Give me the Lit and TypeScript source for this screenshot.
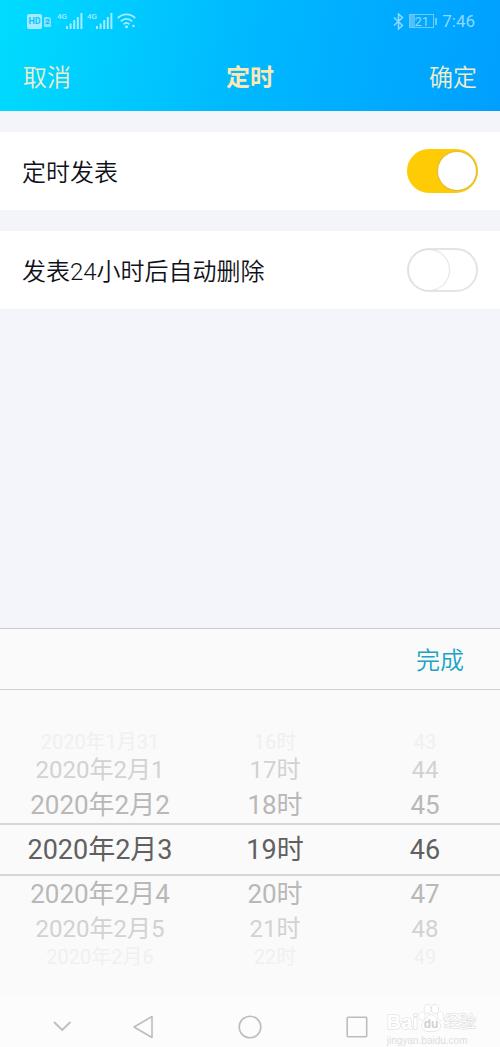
import { LitElement, html, css } from "lit";
import { customElement, property, state } from "lit/decorators.js";
import { classMap } from "lit/directives/class-map.js";

@customElement("status-bar")
class StatusBar extends LitElement {
  static styles = css`
    :host { display: flex; justify-content: space-between; align-items: center; height: 42px; padding: 0 25px 0 27px; color: #a3ebff; font-family: Roboto, sans-serif; }
    .group { display: flex; align-items: center; }
    .right { gap: 5px; color: #8fd8ff; }
    .hd { width: 15px; height: 15px; border-radius: 2px; background: #a3ebff; color: #0bc6f8; font-size: 9px; line-height: 15px; font-weight: 700; text-align: center; }
    .sim { width: 7px; height: 10px; margin: 2px 6px 0 2px; border-radius: 1px 3px 1px 1px; background: #86e2ff; color: #05b9f2; font-size: 8px; line-height: 10px; font-weight: 700; text-align: center; }
    .net { align-self: flex-start; width: 9px; font-size: 8px; line-height: 8px; font-weight: 500; white-space: nowrap; }
    .bars { margin-right: 4px; }
    .time { font-size: 17px; line-height: 20px; }
    .battery { display: flex; align-items: center; gap: 1px; }
    .cell { box-sizing: border-box; width: 25px; height: 14px; border: 1px solid #6fc9fb; background: linear-gradient(90deg, #55bdf8 22%, transparent 22%); font-size: 13px; line-height: 13px; text-align: center; }
    .tip { width: 2px; height: 7px; background: #6fc9fb; }
    svg { display: block; }
  `;

  bars() {
    return html`<svg class="bars" width="17" height="16" viewBox="0 0 17 16" fill="currentColor" aria-hidden="true">
      <rect x="0" y="13" width="2" height="3"/><rect x="3.6" y="10.5" width="2" height="5.5"/><rect x="7.2" y="7" width="2" height="9"/><rect x="10.8" y="4" width="2" height="12"/><rect x="14.4" y="0" width="2" height="16"/>
    </svg>`;
  }

  render() {
    return html`
      <div class="group">
        <span class="hd">HD</span><span class="sim">2</span>
        <span class="net">4G</span>${this.bars()}
        <span class="net">4G</span>${this.bars()}
        <svg width="19" height="16" viewBox="0 0 19 16" fill="none" stroke="currentColor" stroke-width="1.8" aria-hidden="true">
          <path d="M.8 5.2C5.7.2 13.3.2 18.2 5.2M3.8 8.4c3.3-3.4 8.1-3.4 11.4 0M6.5 11.3c1.8-1.7 4.2-1.7 6 0"/>
          <circle cx="9.5" cy="13.8" r="1.5" fill="currentColor" stroke="none"/>
          <circle cx="16.5" cy="13" r="1.2" fill="currentColor" stroke="none"/>
        </svg>
      </div>
      <div class="group right">
        <svg width="11" height="17" viewBox="0 0 11 17" fill="none" stroke="currentColor" stroke-width="1.5" aria-hidden="true">
          <path d="M1 4.5l8.5 8L5.5 16V1l4 3.5L1 12.5"/>
        </svg>
        <span class="battery"><span class="cell">21</span><span class="tip"></span></span>
        <span class="time">7:46</span>
      </div>`;
  }
}

@customElement("switch-row")
class SwitchRow extends LitElement {
  @property() label = "";
  @property({ type: Boolean }) on = false;

  static styles = css`
    :host { display: flex; align-items: center; justify-content: space-between; height: 78px; padding: 0 22px; background: #fff; }
    label { font-size: 24px; line-height: 32px; font-weight: 350; color: #101018; padding-top: 4px; }
    input { appearance: none; box-sizing: border-box; flex: none; display: flex; align-items: center; width: 71px; height: 44px; margin: 0; border: 2px solid #e4e4e4; border-radius: 22px; background: #fff; cursor: pointer; }
    input::before { content: ""; box-sizing: border-box; width: 40px; height: 40px; border-radius: 50%; background: #fff; box-shadow: 0 0 1px 1px #e0e0e0; }
    input:checked { border-color: #ffcb05; background: #ffcb05; justify-content: flex-end; }
    input:checked::before { box-shadow: 0 0 1px 1px #dcbb48; width: 38px; height: 38px; }
  `;

  render() {
    return html`<label for="toggle">${this.label}</label>
      <input id="toggle" type="checkbox" role="switch" .checked=${this.on}
        @change=${(e: Event) => (this.on = (e.target as HTMLInputElement).checked)}>`;
  }
}

@customElement("wheel-column")
class WheelColumn extends LitElement {
  @property() label = "";
  @property({ attribute: false }) items: string[] = [];

  static styles = css`
    :host { display: block; }
    .wheel { display: flex; flex-direction: column; padding: 41px 0 27px; }
    button { box-sizing: border-box; margin: 0; padding: 0; border: 0; background: none; font-family: inherit; font-weight: 400; text-align: center; white-space: nowrap; }
    .d3 { height: 22px; font-size: 20px; line-height: 22px; color: #f0f0f0; }
    .d2 { height: 34px; font-size: 24px; line-height: 34px; color: #d2d2d2; }
    .d1 { height: 36px; font-size: 26px; line-height: 36px; color: #b8b8b8; }
    .d0 { height: 53px; padding-top: 2px; font-size: 27px; line-height: 47px; color: #606060; border: solid #d6d6d6; border-width: 2px 0; }
  `;

  render() {
    return html`<div class="wheel" role="listbox" aria-label=${this.label}>
      ${this.items.map((text, i) => {
        const d = Math.abs(i - 3);
        return html`<button type="button" role="option" aria-selected=${d === 0}
          class=${classMap({ d0: d === 0, d1: d === 1, d2: d === 2, d3: d === 3 })}>${text}</button>`;
      })}
    </div>`;
  }
}

@customElement("app-root")
class AppRoot extends LitElement {
  @state() dates = ["2020年1月31", "2020年2月1", "2020年2月2", "2020年2月3", "2020年2月4", "2020年2月5", "2020年2月6"];
  @state() hours = [16, 17, 18, 19, 20, 21, 22].map((h) => `${h}时`);
  @state() minutes = [43, 44, 45, 46, 47, 48, 49].map(String);

  static styles = css`
    :host { display: flex; flex-direction: column; min-height: 100vh; background: #f4f5fa; font-family: Roboto, "Noto Sans CJK SC", sans-serif; }
    button { margin: 0; padding: 0; border: 0; background: none; font-family: inherit; cursor: pointer; }
    .top { height: 111px; background: linear-gradient(100deg, #00dcff 0%, #00b8ff 50%, #009fff 100%); }
    .bar { display: grid; grid-template-columns: 1fr auto 1fr; align-items: center; height: 69px; padding: 2px 23px 0; box-sizing: border-box; }
    .bar button { font-size: 24px; line-height: 32px; font-weight: 350; color: #f0edcc; justify-self: start; }
    .bar .ok { justify-self: end; }
    h1 { margin: 0; font-size: 24px; line-height: 32px; font-weight: 700; color: #fbe8b4; }
    .options { display: flex; flex-direction: column; gap: 21px; padding: 21px 0; flex: 1; }
    .sheet { background: #fafafa; border-top: 1px solid #c9c9d0; }
    .done { display: flex; justify-content: flex-end; align-items: center; height: 61px; padding: 4px 36px 0; box-sizing: border-box; border-bottom: 1px solid #cfcfd4; }
    .done button { font-size: 24px; line-height: 32px; font-weight: 350; color: #1aa3c4; }
    .wheels { display: grid; grid-template-columns: 4fr 3fr 3fr; }
    .nav { position: relative; display: grid; grid-template-columns: 56px 1fr 1fr 1fr; align-items: center; justify-items: center; height: 52px; padding: 12px 90px 0 34px; box-sizing: border-box; background: #fcfcfc; }
    .nav svg { display: block; }
    .mark { position: absolute; right: 24px; bottom: 0; color: #fff; -webkit-text-stroke: 1px #dadada; paint-order: stroke fill; font-family: "Liberation Sans", "Noto Sans CJK SC", sans-serif; }
    .brand { display: flex; align-items: flex-end; font-size: 20px; line-height: 26px; font-weight: 700; }
    .exp { font-size: 16px; font-weight: 400; }
    .site { font-size: 10px; line-height: 12px; color: #dcdcdc; -webkit-text-stroke: 0; }
    .nav .paw { flex: none; margin-bottom: 2px; }
    .paw text { font-size: 12px; -webkit-text-stroke: 0; stroke: none; fill: #d0d0d0; }
  `;

  render() {
    return html`
      <header class="top">
        <status-bar></status-bar>
        <div class="bar">
          <button type="button">取消</button>
          <h1>定时</h1>
          <button type="button" class="ok">确定</button>
        </div>
      </header>
      <main class="options">
        <switch-row label="定时发表" on></switch-row>
        <switch-row label="发表24小时后自动删除"></switch-row>
      </main>
      <section class="sheet">
        <div class="done"><button type="button">完成</button></div>
        <div class="wheels">
          <wheel-column label="日期" .items=${this.dates}></wheel-column>
          <wheel-column label="小时" .items=${this.hours}></wheel-column>
          <wheel-column label="分钟" .items=${this.minutes}></wheel-column>
        </div>
      </section>
      <nav class="nav">
        <button type="button" aria-label="收起"><svg width="20" height="24" viewBox="0 0 20 24" fill="none" stroke="#bdbdbd" stroke-width="1.8"><path d="M2 7l8.2 8L18.4 7"/></svg></button>
        <button type="button" aria-label="返回"><svg width="22" height="24" viewBox="0 0 22 24" fill="none" stroke="#bdbdbd" stroke-width="1.6" stroke-linejoin="round"><path d="M20 1.5v21L2 12z"/></svg></button>
        <button type="button" aria-label="主页"><svg width="24" height="24" viewBox="0 0 24 24" fill="none" stroke="#bdbdbd" stroke-width="1.6"><circle cx="12" cy="12" r="10.8"/></svg></button>
        <button type="button" aria-label="最近任务"><svg width="24" height="24" viewBox="0 0 24 24" fill="none" stroke="#bdbdbd" stroke-width="1.6"><rect x="2.2" y="2.2" width="19.5" height="19.5" rx="1"/></svg></button>
        <div class="mark">
          <div class="brand">
            <span>Bai</span>
            <svg class="paw" width="26" height="29" viewBox="0 0 26 29" fill="#fff" stroke="#d6d6d6" aria-hidden="true">
              <ellipse cx="3.8" cy="12" rx="3" ry="4"/><ellipse cx="9.5" cy="5" rx="3.2" ry="4.3"/><ellipse cx="17" cy="5" rx="3.2" ry="4.3"/><ellipse cx="22.5" cy="12" rx="3" ry="4"/>
              <path d="M13 11c4 0 4 4 7 6.500s3 7-.5 9c-3 1-10 1-13 0-3.500-2-3.500-6.500-.5-9S9 11 13 11z"/>
              <text x="13" y="24" text-anchor="middle">du</text>
            </svg>
            <span class="exp">经验</span>
          </div>
          <div class="site">jingyan.baidu.com</div>
        </div>
      </nav>`;
  }
}
